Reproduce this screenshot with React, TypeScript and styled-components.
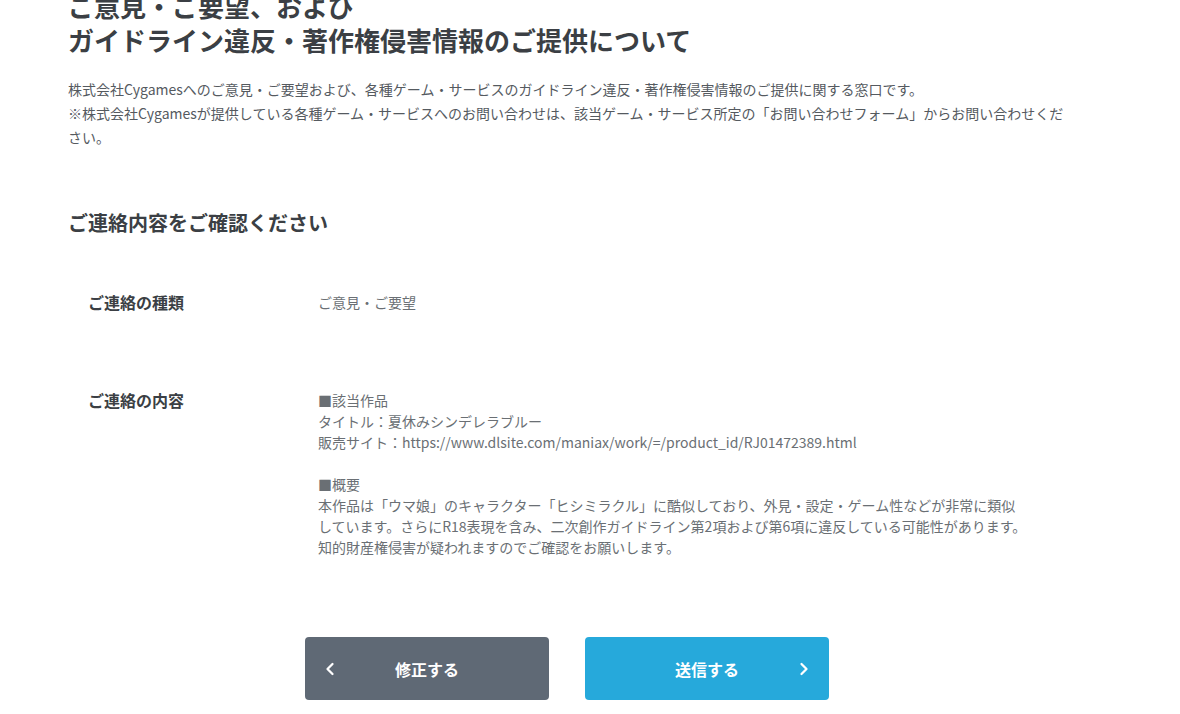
import React from "react";
import styled, { createGlobalStyle } from "styled-components";
import { ChevronLeft, ChevronRight } from "lucide-react";

const GlobalStyle = createGlobalStyle`
  html, body {
    margin: 0;
    padding: 0;
    background: #ffffff;
    overflow: hidden;
  }
  body {
    font-family: "Noto Sans CJK JP", "Noto Sans", sans-serif;
    color: #333;
  }
`;

const Page = styled.div`
  width: 1000px;
  margin: -11px 0 0 68px;
`;

const Title = styled.h1`
  margin: 0;
  font-size: 26px;
  line-height: 34px;
  font-weight: 700;
  color: #3b3f44;
`;

const Lead = styled.p`
  margin: 20px 0 0;
  font-size: 14px;
  line-height: 24px;
  color: #555a5f;
`;

const SectionTitle = styled.h2`
  margin: 59px 0 0;
  font-size: 20px;
  line-height: 30px;
  font-weight: 700;
  color: #3b3f44;
`;

const Table = styled.div`
  margin-top: 54px;
  display: flex;
  flex-direction: column;
`;

const Row = styled.div<{ $pad: number }>`
  display: grid;
  grid-template-columns: 230px 1fr;
  padding: 0 0 ${(p) => p.$pad}px 20px;
`;

const Label = styled.div`
  font-size: 16px;
  line-height: 21px;
  font-weight: 700;
  color: #3b3f44;
`;

const Value = styled.div`
  font-size: 14px;
  line-height: 21px;
  color: #6a6f74;
  white-space: pre-line;
`;

const Buttons = styled.div`
  display: flex;
  justify-content: center;
  gap: 36px;
  margin-top: 79px;
  padding-right: 2px;
`;

const Button = styled.button<{ $tone: "back" | "send" }>`
  width: 244px;
  height: 63px;
  border: none;
  border-radius: 4px;
  background: ${(p) => (p.$tone === "back" ? "#5f6975" : "#26a9db")};
  color: #fff;
  font-family: "Noto Sans CJK JP", "Noto Sans", sans-serif;
  font-size: 16px;
  font-weight: 700;
  display: flex;
  align-items: center;
  justify-content: center;
  position: relative;
  cursor: pointer;

  svg {
    position: absolute;
    top: 50%;
    transform: translateY(-50%);
  }
`;

const IconLeft = styled(ChevronLeft)`
  left: 15px;
`;

const IconRight = styled(ChevronRight)`
  right: 15px;
`;

const detail = `■該当作品
タイトル：夏休みシンデレラブルー
販売サイト：https://www.dlsite.com/maniax/work/=/product_id/RJ01472389.html

■概要
本作品は「ウマ娘」のキャラクター「ヒシミラクル」に酷似しており、外見・設定・ゲーム性などが非常に類似
しています。さらにR18表現を含み、二次創作ガイドライン第2項および第6項に違反している可能性があります。
知的財産権侵害が疑われますのでご確認をお願いします。`;

export default function App() {
  return (
    <>
      <GlobalStyle />
      <Page>
        <Title>
          ご意見・ご要望、および
          <br />
          ガイドライン違反・著作権侵害情報のご提供について
        </Title>
        <Lead>
          株式会社Cygamesへのご意見・ご要望および、各種ゲーム・サービスのガイドライン違反・著作権侵害情報のご提供に関する窓口です。
          <br />
          ※株式会社Cygamesが提供している各種ゲーム・サービスへのお問い合わせは、該当ゲーム・サービス所定の「お問い合わせフォーム」からお問い合わせください。
        </Lead>
        <SectionTitle>ご連絡内容をご確認ください</SectionTitle>
        <Table>
          <Row $pad={77}>
            <Label>ご連絡の種類</Label>
            <Value>ご意見・ご要望</Value>
          </Row>
          <Row $pad={0}>
            <Label>ご連絡の内容</Label>
            <Value>{detail}</Value>
          </Row>
        </Table>
        <Buttons>
          <Button $tone="back">
            <IconLeft size={20} strokeWidth={2.75} />
            修正する
          </Button>
          <Button $tone="send">
            送信する
            <IconRight size={20} strokeWidth={2.75} />
          </Button>
        </Buttons>
      </Page>
    </>
  );
}
